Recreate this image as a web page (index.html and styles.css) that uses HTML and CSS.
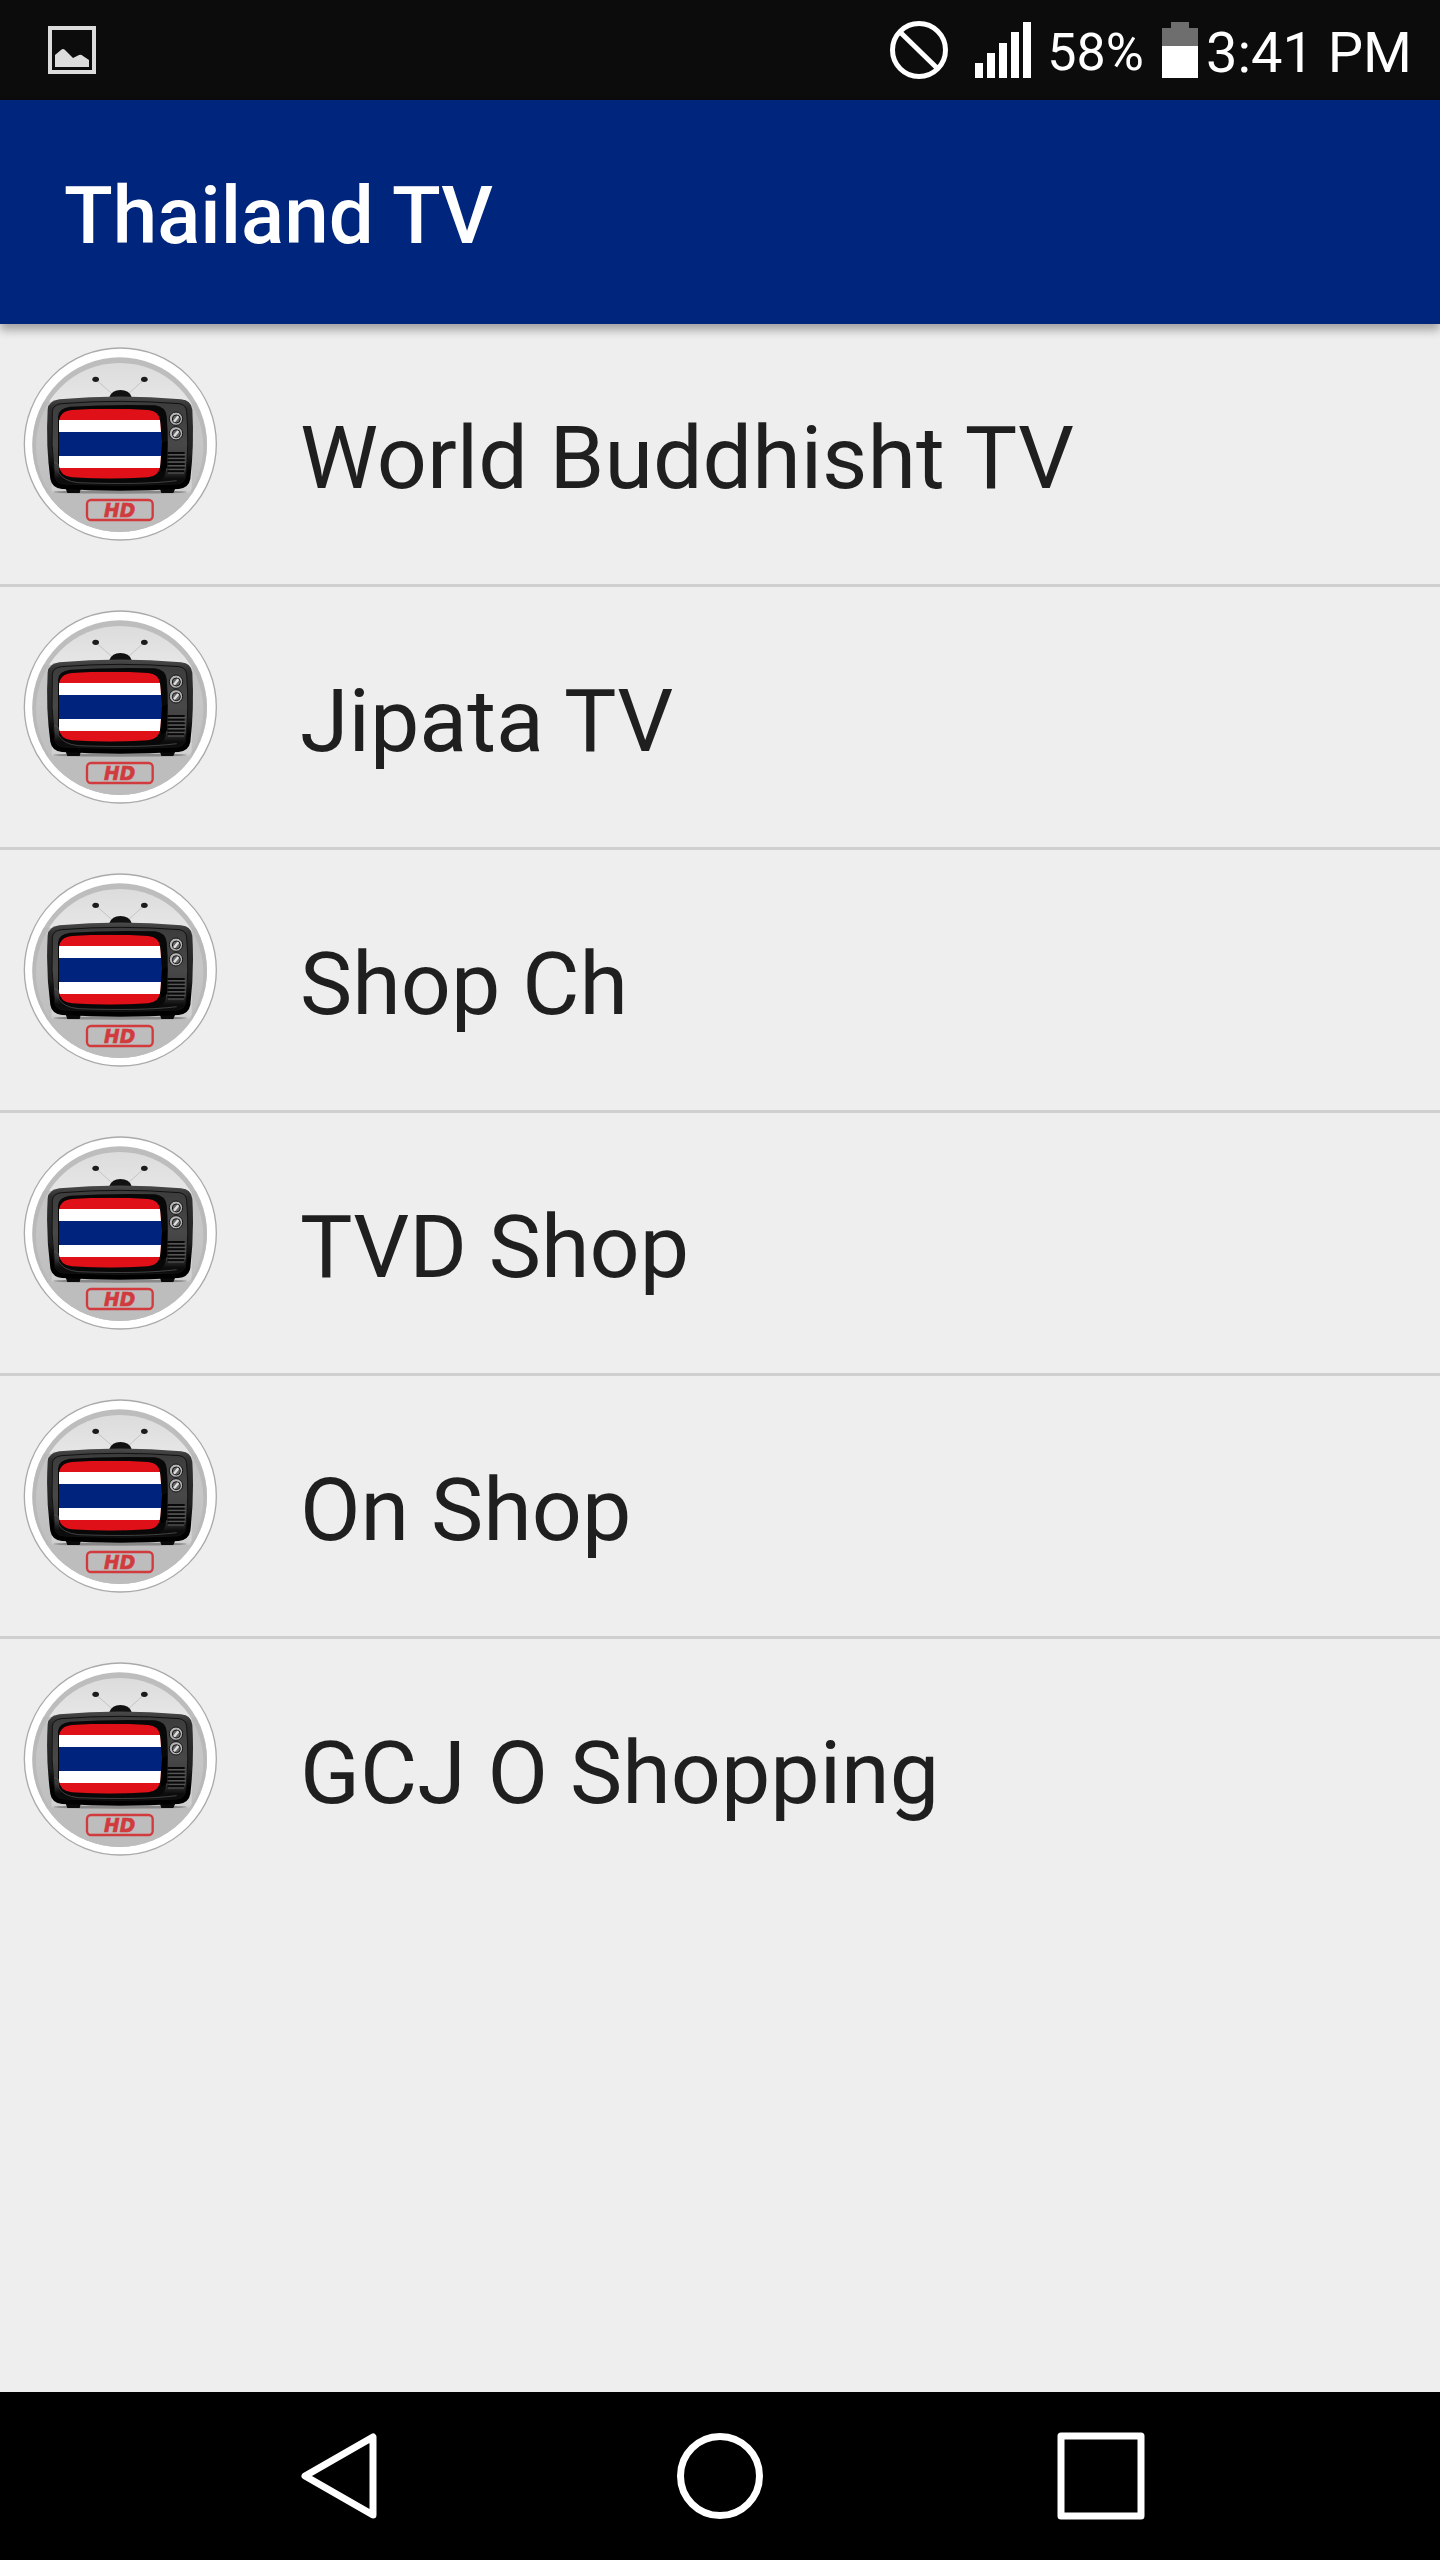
FILE: index.html
```html
<!DOCTYPE html>
<html lang="en">
<head>
<meta charset="utf-8">
<meta name="viewport" content="width=device-width, initial-scale=1">
<title>Thailand TV</title>
<link rel="stylesheet" href="styles.css">
</head>
<body>
<svg class="defs" aria-hidden="true">
  <defs>
    <linearGradient id="disc" x1="0" y1="0" x2="0" y2="1">
      <stop offset="0" stop-color="#dcdcdc"/><stop offset=".45" stop-color="#f0f0f0"/><stop offset=".76" stop-color="#d0d0d0"/><stop offset=".79" stop-color="#bcbcbc"/><stop offset="1" stop-color="#c0c0c0"/>
    </linearGradient>
    <linearGradient id="shell" x1="0" y1="0" x2="0" y2="1">
      <stop offset="0" stop-color="#4a4a4a"/><stop offset=".12" stop-color="#303030"/><stop offset=".6" stop-color="#202020"/><stop offset=".8" stop-color="#000"/><stop offset="1" stop-color="#000"/>
    </linearGradient>
    <linearGradient id="face" x1="0" y1="0" x2="0" y2="1">
      <stop offset="0" stop-color="#3c3c3c"/><stop offset=".5" stop-color="#484848"/><stop offset=".8" stop-color="#3a3a3a"/><stop offset=".92" stop-color="#0c0c0c"/>
    </linearGradient>
    <clipPath id="screen"><path d="M147 262Q148 229 186 225Q300 217 414 225Q447 228 450 256Q458 327 450 396Q446 424 414 427Q300 435 186 427Q150 423 147 392Z"/></clipPath>
    <clipPath id="inner"><circle cx="329" cy="329" r="262"/></clipPath>
    <symbol id="tv" viewBox="30 27 600 600">
      <circle cx="331" cy="327" r="288" fill="#fff" stroke="#aaa" stroke-width="4"/>
      <circle cx="329" cy="329" r="262" fill="#bdbdbd"/>
      <g clip-path="url(#inner)">
        <circle cx="329" cy="335" r="251" fill="url(#disc)"/>
        <path d="M60 200H125V475H60ZM545 200H610V475H545Z" fill="#b8b8b8" opacity=".75"/>
        <path d="M60 474H610V600H60Z" fill="#bdbdbd"/>
      </g>
      <path d="M257 133L308 178M403 133L353 178" stroke="#c5c5c5" stroke-width="3"/>
      <ellipse cx="257" cy="133" rx="10" ry="8" fill="#1c1c1c"/>
      <ellipse cx="403" cy="133" rx="10" ry="8" fill="#1c1c1c"/>
      <path d="M298 186Q306 165 331 165Q358 165 365 186Z" fill="#111"/>
      <ellipse cx="330" cy="471" rx="200" ry="5" fill="#888"/>
      <path d="M165 455H214L209 474H172ZM448 455H498L490 474H454Z" fill="#090909"/>
      <path d="M113 224Q115 197 148 193Q330 176 513 193Q545 196 547 224Q553 330 541 432Q536 459 506 462Q330 472 156 462Q126 459 121 432Q107 330 113 224Z" fill="url(#shell)"/>
      <path d="M127 229Q129 209 154 206Q330 192 508 206Q528 209 530 229Q538 330 527 425Q523 445 500 447Q330 456 161 447Q138 445 134 425Q122 330 127 229Z" fill="url(#face)" stroke="#111" stroke-width="3"/>
      <path d="M144 245Q146 219 180 215Q300 208 435 211Q466 215 470 243Q478 327 467 413Q462 438 430 441Q300 449 176 438Q146 433 144 407Z" fill="#080808"/>
      <path d="M132 382L146 389V412Q158 438 205 443Q400 450 500 437" fill="none" stroke="#5a5a5a" stroke-width="2"/>
      <path d="M453 327L472 318V398L453 410Z" fill="#000"/>
      <g clip-path="url(#screen)">
        <path d="M140 215H460V435H140Z" fill="#df1018"/>
        <path d="M140 255H460V399H140Z" fill="#fff"/>
        <path d="M140 291H460V363H140Z" fill="#00237e"/>
      </g>
      <g stroke="#141414" stroke-width="3">
        <circle cx="498" cy="251" r="20" fill="#b4b4b4"/>
        <circle cx="498" cy="295" r="20" fill="#b4b4b4"/>
        <circle cx="499" cy="252" r="12" fill="#666"/>
        <circle cx="499" cy="296" r="12" fill="#666"/>
      </g>
      <path d="M492 260L505 244M492 304L505 288" stroke="#ddd" stroke-width="7"/>
      <path d="M472 354H524M472 365H524M472 376H524M472 387H524M472 398H524M472 409H522" stroke="#080808" stroke-width="6"/>
      <path d="M476 359H528M476 370H528M476 381H528M476 392H528M476 403H526M474 414H522" stroke="#5b5b5b" stroke-width="3"/>
      <rect x="231" y="495" width="197" height="60" rx="12" fill="none" stroke="#d13b3d" stroke-width="7"/>
      <text class="hd" x="329" y="545" text-anchor="middle">HD</text>
    </symbol>
  </defs>
</svg>

<header class="status">
  <svg class="status-photo" width="48" height="48" viewBox="0 0 48 48" role="img" aria-label="Screenshot saved">
    <path d="M2 2H46V46H2Z" fill="none" stroke="#dcdcdc" stroke-width="4"/>
    <path d="M7 29L13 24Q15 22 17 24L25 32L31 29Q33 28 35 30L41 34V41H7Z" fill="#dcdcdc"/>
  </svg>
  <svg class="status-ban" width="58" height="58" viewBox="0 0 58 58" role="img" aria-label="No notifications">
    <circle cx="29" cy="29" r="26.500" fill="none" stroke="#fff" stroke-width="5"/>
    <path d="M10 11L48 48" stroke="#fff" stroke-width="5"/>
  </svg>
  <svg class="status-signal" width="56" height="56" viewBox="0 0 56 56" role="img" aria-label="Signal">
    <path d="M0 41H8V56H0ZM12 31H20V56H12ZM24 21H32V56H24ZM36 10H44V56H36ZM48 0H56V56H48Z" fill="#fff"/>
  </svg>
  <span class="status-percent">58%</span>
  <svg class="status-battery" width="36" height="56" viewBox="0 0 36 56" role="img" aria-label="Battery">
    <path d="M9 0H27V6H36V24H0V6H9Z" fill="#6e6e6e"/>
    <path d="M0 24H36V56H0Z" fill="#fff"/>
  </svg>
  <span class="status-time">3:41 PM</span>
</header>

<div class="appbar"><h1>Thailand TV</h1></div>

<main>
  <ul class="channels">
    <li><a href="#world-buddhisht"><svg class="logo" aria-hidden="true"><use href="#tv"/></svg><span>World Buddhisht TV</span></a></li>
    <li><a href="#jipata"><svg class="logo" aria-hidden="true"><use href="#tv"/></svg><span>Jipata TV</span></a></li>
    <li><a href="#shop-ch"><svg class="logo" aria-hidden="true"><use href="#tv"/></svg><span>Shop Ch</span></a></li>
    <li><a href="#tvd-shop"><svg class="logo" aria-hidden="true"><use href="#tv"/></svg><span>TVD Shop</span></a></li>
    <li><a href="#on-shop"><svg class="logo" aria-hidden="true"><use href="#tv"/></svg><span>On Shop</span></a></li>
    <li><a href="#gcj-o-shopping"><svg class="logo" aria-hidden="true"><use href="#tv"/></svg><span>GCJ O Shopping</span></a></li>
  </ul>
</main>

<nav class="navbar">
  <button type="button" aria-label="Back"><svg width="88" height="88" viewBox="0 0 88 88"><path d="M78 5V83L10 44Z"/></svg></button>
  <button type="button" aria-label="Home"><svg width="88" height="88" viewBox="0 0 88 88"><circle cx="44" cy="44" r="39.500"/></svg></button>
  <button type="button" aria-label="Recent apps"><svg width="88" height="88" viewBox="0 0 88 88"><path d="M4 4H84V84H4Z"/></svg></button>
</nav>
</body>
</html>
```

FILE: styles.css
```css
* { box-sizing: border-box; }

body {
  margin: 0;
  min-height: 100vh;
  display: flex;
  flex-direction: column;
  background: #eee;
  color: #1f1f1f;
  font-family: Roboto, "Liberation Sans", sans-serif;
}

.defs { position: absolute; width: 0; height: 0; }

.status {
  display: flex;
  align-items: center;
  height: 100px;
  padding: 0 28px 0 48px;
  background: #0c0c0c;
  color: #fff;
}
.status-ban { margin: 0 27px 0 auto; }
.status-percent { margin: 0 18px 0 16px; padding-top: 6px; font-size: 52px; line-height: 60px; }
.status-battery { margin-right: 8px; }
.status-time { padding-top: 6px; font-size: 56px; line-height: 60px; }

.appbar {
  position: relative;
  display: flex;
  align-items: center;
  height: 224px;
  padding: 8px 64px 0;
  background: #00257c;
  color: #fff;
  box-shadow: 0 6px 9px rgba(0, 0, 0, .32);
}
.appbar h1 { margin: 0; font-size: 80px; line-height: 96px; font-weight: 500; }

main { flex: 1; }
.channels { margin: 0; padding: 0; list-style: none; }
.channels li + li { border-top: 3px solid #cfcfcf; }
.channels a {
  display: flex;
  align-items: center;
  gap: 80px;
  height: 260px;
  padding: 0 20px;
  color: inherit;
  font-size: 88px;
  line-height: 104px;
  text-decoration: none;
}
.channels span { padding-top: 8px; }
.logo { flex: none; align-self: flex-start; width: 200px; height: 200px; margin-top: 20px; }
.hd { fill: #d13b3d; stroke: #d13b3d; stroke-width: 2; font: italic bold 56px "DejaVu Sans", sans-serif; }

.navbar {
  display: grid;
  grid-template-columns: repeat(3, 1fr);
  height: 168px;
  padding: 0 148px;
  background: #000;
}
.navbar button {
  display: flex;
  align-items: center;
  justify-content: center;
  padding: 0;
  border: 0;
  background: none;
}
.navbar svg { fill: none; stroke: #fff; stroke-width: 7; stroke-linejoin: round; }
```
